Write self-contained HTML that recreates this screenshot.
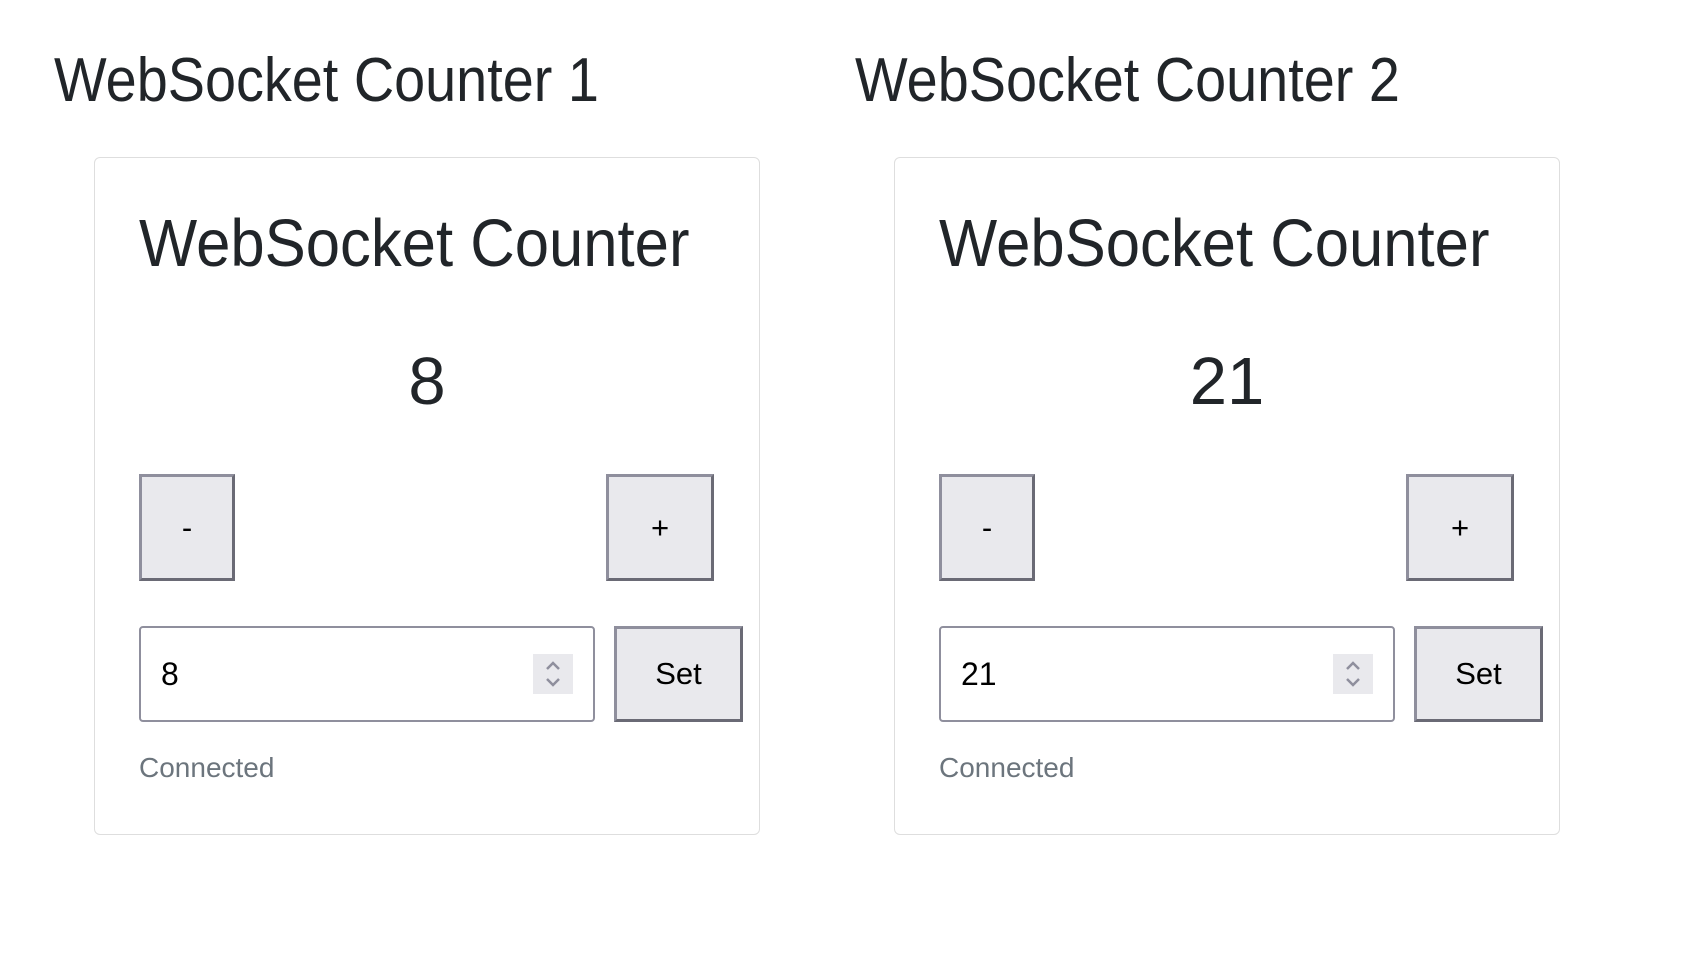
<!DOCTYPE html>
<html><head><style>
body{margin:0;width:1682px;height:975px;background:#fff;font-family:"Liberation Sans",sans-serif;color:#212529;position:relative;overflow:hidden}
.a{position:absolute}
.h{font-size:62px;white-space:nowrap;transform:scaleX(.9);transform-origin:left top;line-height:1}
.card{border:1.5px solid #dedede;border-radius:6px;width:664px;height:676px;top:157px}
.t{font-size:67px;white-space:nowrap;transform:scaleX(.92);transform-origin:left top;line-height:1;left:44px;top:52px}
.n{font-size:67px;line-height:1;top:190px;left:0;width:664px;text-align:center}
.b{background:#e9e9ed;border:3px solid;border-color:#8f8f9d #6a6a75 #6a6a75 #8f8f9d;box-sizing:border-box;display:flex;align-items:center;justify-content:center;font-size:31px;color:#000}
.in{border:2px solid #8f8f9d;border-radius:4px;box-sizing:border-box;left:44px;top:468px;width:456px;height:96px;font-size:32px;color:#000;padding-left:20px;display:flex;align-items:center}
.sp{position:absolute;right:20px;top:26px;width:40px;height:40px;background:#e9e9ed}
.c{font-size:28px;color:#6c757d;left:44px;top:594px}
</style></head><body>
<div class="a h" style="left:54px;top:50px">WebSocket Counter 1</div>
<div class="a h" style="left:855px;top:50px">WebSocket Counter 2</div>

<div class="a card" style="left:94px">
 <div class="a t">WebSocket Counter</div>
 <div class="a n">8</div>
 <div class="a b" style="left:44px;top:316px;width:96px;height:107px">-</div>
 <div class="a b" style="left:511px;top:316px;width:108px;height:107px">+</div>
 <div class="a in">8<div class="sp"><svg width="40" height="40" viewBox="0 0 40 40" fill="none" stroke="#8f8f9d" stroke-width="2.5"><path d="M14 15l6-6 6 6M14 25l6 6 6-6"/></svg></div></div>
 <div class="a b" style="left:519px;top:468px;width:129px;height:96px">Set</div>
 <div class="a c">Connected</div>
</div>

<div class="a card" style="left:894px">
 <div class="a t">WebSocket Counter</div>
 <div class="a n">21</div>
 <div class="a b" style="left:44px;top:316px;width:96px;height:107px">-</div>
 <div class="a b" style="left:511px;top:316px;width:108px;height:107px">+</div>
 <div class="a in">21<div class="sp"><svg width="40" height="40" viewBox="0 0 40 40" fill="none" stroke="#8f8f9d" stroke-width="2.5"><path d="M14 15l6-6 6 6M14 25l6 6 6-6"/></svg></div></div>
 <div class="a b" style="left:519px;top:468px;width:129px;height:96px">Set</div>
 <div class="a c">Connected</div>
</div>
</body></html>
